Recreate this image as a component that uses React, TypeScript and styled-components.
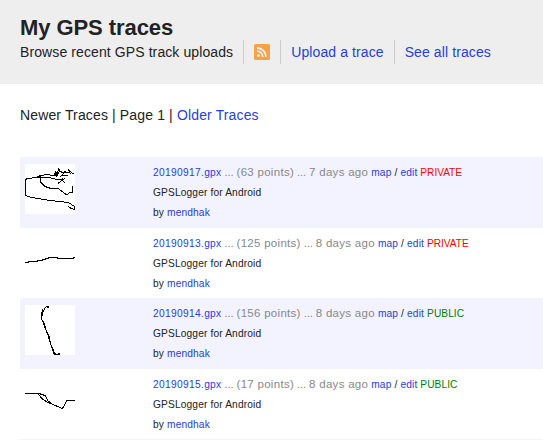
import React from "react";
import styled, { createGlobalStyle } from "styled-components";

const GlobalStyle = createGlobalStyle`
  html, body { margin: 0; padding: 0; }
  body {
    background: #fff;
    color: #222;
    font: 14px/20px "Liberation Sans", Arial, sans-serif;
    letter-spacing: 0.1px;
    overflow: hidden;
  }
`;

const Page = styled.div`
  width: 543px;
  height: 440px;
  overflow: hidden;
`;

const Header = styled.header`
  box-sizing: border-box;
  height: 84px;
  padding: 15px 20px 0;
  background: #eee;
`;

const Title = styled.h1`
  margin: 0;
  height: 25px;
  font-size: 22px;
  line-height: 26px;
  font-weight: bold;
  letter-spacing: -0.07px;
`;

const Actions = styled.ul`
  display: flex;
  margin: 0;
  padding: 0;
  list-style: none;
  white-space: nowrap;
`;

const Action = styled.li<{ $first?: boolean }>`
  display: flex;
  align-items: center;
  height: 24px;
  padding: 0 10px 0 ${(p) => (p.$first ? 0 : 10)}px;
  border-left: ${(p) => (p.$first ? "0" : "1px solid #ccc")};
`;

const Link = styled.a`
  color: #2540de;
  text-decoration: none;
`;

const Pager = styled.nav`
  padding: 21px 20px 0;
  height: 52px;
  letter-spacing: 0.14px;
  white-space: nowrap;
`;

const TraceList = styled.div`
  margin-left: 20px;
`;

const Row = styled.article<{ $shaded: boolean }>`
  box-sizing: border-box;
  display: flex;
  height: ${(p) => (p.$shaded ? 71 : 70)}px;
  padding: 7px 5px 0;
  background: ${(p) => (p.$shaded ? "#f3f3ff" : "#fff")};
  white-space: nowrap;
`;

const Thumb = styled.svg`
  flex: none;
  width: 50px;
  height: 50px;
  margin-right: 78px;
  background: #fff;
  fill: none;
  stroke: #000;
  stroke-width: 1;
`;

const Details = styled.div`
  margin-top: -2px;
  font-size: 10.2px;
  letter-spacing: 0.14px;
`;

const Line = styled.div<{ $tall?: boolean }>`
  height: ${(p) => (p.$tall ? 21 : 20)}px;
  line-height: 20px;
`;

const FileLink = styled(Link)`
  letter-spacing: 0.33px;
`;

const Summary = styled.span`
  color: #888;
  font-size: 11.5px;
  letter-spacing: 0.29px;
`;

const Dots = styled.span`
  letter-spacing: -0.2px;
`;

const Visibility = styled.span<{ $open: boolean }>`
  color: ${(p) => (p.$open ? "#008000" : "#ff0000")};
  letter-spacing: ${(p) => (p.$open ? 0.05 : -0.06)}px;
`;

const RssIcon = () => (
  <svg width="16" height="16" viewBox="0 0 16 16">
    <rect width="16" height="16" rx="1.5" fill="#f9a146" />
    <circle cx="4.4" cy="11.6" r="1.4" fill="#f5f1ec" />
    <path d="M3 7.2a5.8 5.8 0 0 1 5.8 5.8M3 4a9 9 0 0 1 9 9" fill="none" stroke="#f5f1ec" strokeWidth="1.8" />
  </svg>
);

const traces = [
  {
    file: "20190917.gpx", points: 63, age: 7, open: false,
    paths: [
      "M43.5 42.5L46 44.5L49.5 45.5V42.5L43.5 38.5L34 37.5L25 36.5L13 34.5L5 33L.5 31.5V16L2 14.5L12 13.5L20 10.5L29 11.5L31 7.5V13L34 4.5V8L32 12M12 12.5L17 11.5M35 7L39 9L36 12L43 11.5M39 7.5L45 9L44 6.5L48.5 10M12 13L24 13.5L32 15.5L39 15L33 19.5M36 15L40 19M38 14.5L36 17M15.5 14V18L20 22.5L26 24.5H33L42 31L44 29L47.5 28.5V22",
      "M30.5 7V12M36 9L41 8.5",
    ],
  },
  { file: "20190913.gpx", points: 125, age: 8, open: false, paths: ["M0 27.5H3V26.5H12V25.5H17V24.5H20V23.5H23V22.5H32V23.5H48V22.5H50"] },
  {
    file: "20190914.gpx", points: 156, age: 8, open: true,
    paths: [
      "M24 1.5H22L20 3L18 7L17.5 10L16 13L18 17L20 23L23 30L25 37L28 46L30 49H35",
      "M22 .5V2.5M23.5 .5V2.5M18 4L16.5 9V14L19 18L21 25L24 31L26 40L28 44V48H31M29 49.5H33M33 48.5H35",
    ],
  },
  {
    file: "20190915.gpx", points: 17, age: 8, open: true,
    paths: ["M0 17.5H14L20 19.5L23 25L28 28.5L37.5 32.5L42 24.5H50", "M13 18L18 23.5L23 26.5L26 28"],
  },
];

export default function App() {
  return (
    <Page>
      <GlobalStyle />
      <Header>
        <Title>My GPS traces</Title>
        <Actions>
          <Action $first>Browse recent GPS track uploads</Action>
          <Action><RssIcon /></Action>
          <Action><Link>Upload a trace</Link></Action>
          <Action><Link>See all traces</Link></Action>
        </Actions>
      </Header>
      <Pager>
        Newer Traces | Page 1 | <Link>Older Traces</Link>
      </Pager>
      <TraceList>
        {traces.map((t, i) => (
          <Row key={t.file} $shaded={i % 2 === 0}>
            <Thumb viewBox="0 0 50 50" shapeRendering="crispEdges">
              {t.paths.map((d) => <path key={d} d={d} />)}
            </Thumb>
            <Details>
              <Line $tall>
                <FileLink>{t.file}</FileLink>{" "}
                <Summary>
                  <Dots>... </Dots>({t.points} points)<Dots> ... </Dots>{t.age} days ago
                </Summary>{" "}
                <Link>map</Link> / <Link>edit</Link>{" "}
                <Visibility $open={t.open}>{t.open ? "PUBLIC" : "PRIVATE"}</Visibility>
              </Line>
              <Line>GPSLogger for Android</Line>
              <Line>by <Link>mendhak</Link></Line>
            </Details>
          </Row>
        ))}
        <Row $shaded />
      </TraceList>
    </Page>
  );
}
